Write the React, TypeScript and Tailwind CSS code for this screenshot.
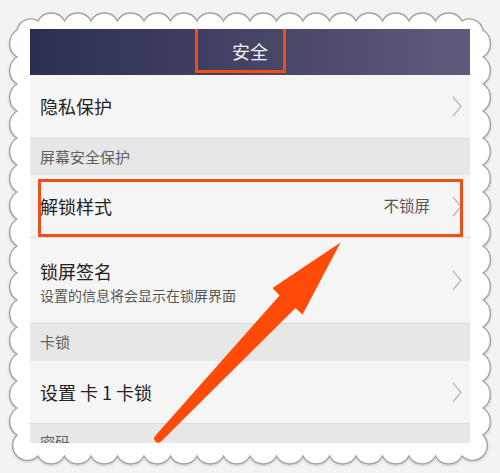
import React from "react";

const FONT = { fontFamily: '"Noto Sans CJK SC", "Noto Sans", sans-serif' };

function framePath() {
  const tx = Array.from({ length: 17 }, (_, k) => 38 + 26.5 * k);
  const sy = Array.from({ length: 16 }, (_, k) => 30 + 27 * k);
  let d = `M 38 21`;
  for (let k = 1; k < tx.length; k++) d += ` A 15 15 0 0 1 ${tx[k]} 21`;
  d += ` A 14 14 0 0 1 483 30`;
  for (let k = 1; k < sy.length; k++) d += ` A 16 16 0 0 1 483 ${sy[k]}`;
  d += ` A 14 14 0 0 1 462 456`;
  for (let k = tx.length - 2; k >= 0; k--) d += ` A 15 15 0 0 1 ${tx[k]} 456`;
  d += ` A 14 14 0 0 1 17 435`;
  for (let k = sy.length - 2; k >= 0; k--) d += ` A 16 16 0 0 1 17 ${sy[k]}`;
  d += ` A 14 14 0 0 1 38 21 Z`;
  return d;
}

function Chevron() {
  return (
    <svg width="10" height="21" viewBox="0 0 10 21" className="shrink-0">
      <polyline points="1,1 9,10.5 1,20" fill="none" stroke="#b8b8b8" strokeWidth="1.3" />
    </svg>
  );
}

function Section({ label, h }: { label: string; h: string }) {
  return (
    <div className={`${h} bg-[#e7e7e7] border-t border-[#d9d9d9] flex items-start pl-[10px] pt-[7px] shrink-0`}>
      <span className="text-[15px] leading-[22px] text-[#606060]">{label}</span>
    </div>
  );
}

export default function App() {
  return (
    <div className="relative w-[500px] h-[473px] bg-[#f3f3f3] overflow-hidden" style={FONT}>
      <svg className="absolute inset-0" width="500" height="473" viewBox="0 0 500 473">
        <defs>
          <filter id="sh" x="-5%" y="-5%" width="110%" height="110%">
            <feDropShadow dx="0" dy="1" stdDeviation="1" floodColor="#000" floodOpacity="0.18" />
          </filter>
        </defs>
        <path d={framePath()} fill="#ffffff" stroke="#a3a3a3" strokeWidth="1.4" filter="url(#sh)" />
      </svg>

      <div className="relative pt-[29px] pl-[30px]">
        <div className="w-[440px] h-[414px] overflow-hidden flex flex-col bg-[#f5f5f5]">
          {/* header */}
          <div className="relative h-[46px] shrink-0 bg-gradient-to-r from-[#2a2f50] to-[#615a7b] flex items-center justify-center">
            <span className="text-[18px] text-[#f0f0f4] leading-none mb-[3px]">安全</span>
            <div className="absolute left-[165px] top-0 w-[91px] h-[44px] border-l-[3px] border-r-[3px] border-b-[3px] border-[#ef4e16]" />
          </div>

          {/* 隐私保护 */}
          <div className="h-[63px] shrink-0 flex items-center justify-between pl-[10px] pr-[8px]">
            <span className="text-[18px] text-[#222]">隐私保护</span>
            <Chevron />
          </div>

          <Section label="屏幕安全保护" h="h-[37px]" />

          {/* 解锁样式 */}
          <div className="relative h-[62px] shrink-0 flex items-center justify-between pl-[10px] pr-[8px]">
            <span className="text-[18px] text-[#222]">解锁样式</span>
            <div className="flex items-center gap-[22px]">
              <span className="text-[15.5px] text-[#555]">不锁屏</span>
              <Chevron />
            </div>
            <div className="absolute left-[8px] top-[4px] w-[425px] h-[58px] border-[3px] border-[#ef4e16]" />
          </div>

          {/* 锁屏签名 */}
          <div className="h-[86px] shrink-0 border-t border-[#dddddd] flex items-center justify-between pl-[10px] pr-[8px]">
            <div className="flex flex-col pt-[2px]">
              <span className="text-[18px] leading-[26px] text-[#222]">锁屏签名</span>
              <span className="text-[14px] leading-[22px] text-[#555]">设置的信息将会显示在锁屏界面</span>
            </div>
            <Chevron />
          </div>

          <Section label="卡锁" h="h-[38px]" />

          {/* 设置 卡 1 卡锁 */}
          <div className="h-[62px] shrink-0 flex items-center justify-between pl-[10px] pr-[8px]">
            <span className="text-[18px] text-[#222] whitespace-pre">设置 卡 1 卡锁</span>
            <Chevron />
          </div>

          <Section label="密码" h="h-[40px]" />
        </div>
      </div>

      {/* arrow */}
      <svg className="absolute inset-0 pointer-events-none" width="500" height="473" viewBox="0 0 500 473">
        <path
          d="M 340.5 242.5 L 272.5 288 L 279.5 295.5 L 155.5 435.5 A 3.6 3.6 0 0 0 161 441.5 L 295.5 308 L 302.5 314.5 Z"
          fill="#ff4a08"
        />
      </svg>
    </div>
  );
}
